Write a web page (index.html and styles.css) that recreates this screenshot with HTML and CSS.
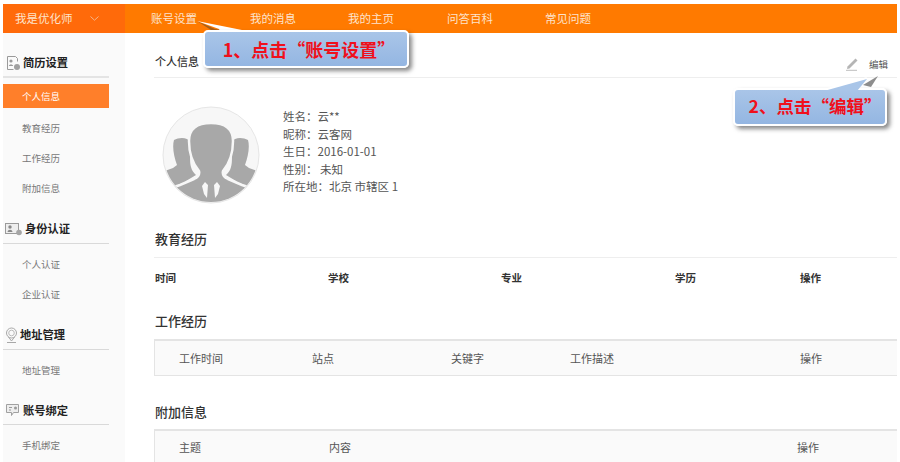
FILE: index.html
```html
<!DOCTYPE html>
<html lang="zh-CN">
<head>
<meta charset="utf-8">
<title>个人信息</title>
<link rel="stylesheet" href="styles.css">
</head>
<body>
<div class="page">
  <header class="topbar">
    <div class="brand"><span>我是优化师</span>
      <svg class="chev" width="9" height="5" viewBox="0 0 9 5"><path d="M.5.5 4.5 4.200 8.500.5" fill="none" stroke="#f5b58a"/></svg>
    </div>
    <nav class="nav">
      <a class="n1">账号设置</a><a class="n2">我的消息</a><a class="n3">我的主页</a><a class="n4">问答百科</a><a class="n5">常见问题</a>
    </nav>
  </header>
  <div class="body">
    <aside class="side">
      <section class="group first">
        <h3 class="ghead"><svg class="gi" width="16" height="16" viewBox="0 0 16 16"><path d="M2.500 1.500h8l2 2v3M2.500 1.500v13h6" fill="none" stroke="#9a9a9a"/><circle cx="6" cy="6" r="1.600" fill="#9a9a9a"/><path d="M3.800 11c.3-2 4-2 4.400 0z" fill="#9a9a9a"/><circle cx="12" cy="12" r="3" fill="#a0a0a0"/></svg>简历设置</h3>
        <a class="item active">个人信息</a><a class="item">教育经历</a><a class="item">工作经历</a><a class="item">附加信息</a>
      </section>
      <section class="group g2">
        <h3 class="ghead"><svg class="gi" width="18" height="14" viewBox="0 0 18 14"><rect x=".5" y="1.500" width="13" height="10" fill="#eee" stroke="#9a9a9a"/><circle cx="5" cy="5" r="1.700" fill="#888"/><path d="M2.500 10c.3-3 4.700-3 5 0z" fill="#888"/><circle cx="14" cy="10.500" r="2.800" fill="#a5a5a5"/></svg>身份认证</h3>
        <a class="item">个人认证</a><a class="item">企业认证</a>
      </section>
      <section class="group g3">
        <h3 class="ghead"><svg class="gi" width="13" height="17" viewBox="0 0 13 17"><circle cx="6.500" cy="6" r="5" fill="none" stroke="#a8a8a8"/><circle cx="6.500" cy="6" r="2.800" fill="none" stroke="#bbb"/><path d="M3.500 10 6.500 14 9.500 10M2 15.500h9" fill="none" stroke="#a8a8a8"/></svg>地址管理</h3>
        <a class="item">地址管理</a>
      </section>
      <section class="group g3 g4">
        <h3 class="ghead"><svg class="gi" width="16" height="15" viewBox="0 0 16 15"><path d="M1.500 1.500h12v8h-5l-2 3v-3h-5z" fill="#eee" stroke="#a0a0a0"/><path d="M4 4.500h3M4 7h2" stroke="#999"/><circle cx="10.500" cy="5" r="1.500" fill="#999"/></svg>账号绑定</h3>
        <a class="item">手机绑定</a>
      </section>
    </aside>
    <main class="main">
      <div class="head">
        <h2 class="title">个人信息</h2>
        <div class="edit">
          <svg width="13" height="14" viewBox="0 0 13 14"><path d="M1.500 9.500 9.500 1.500l2 2-8 8-2.500.5z" fill="#b5b5b5"/><path d="M0 13.300h11" stroke="#bdbdbd"/></svg>
          <span>编辑</span>
        </div>
      </div>
      <div class="profile">
        <svg class="avatar" width="98" height="98" viewBox="0 0 98 98">
          <circle cx="49" cy="49" r="48" fill="#f7f7f7" stroke="#e6e6e6"/>
          <clipPath id="c"><circle cx="49" cy="49" r="47"/></clipPath>
          <g clip-path="url(#c)" fill="#a8a8a8">
            <path d="M12 34c5-3 14-3 16 2 1 9-1 18 1 25 1 4 3 6 5 8l-10 6-5 6-22 0 0-14 14-5 4-3c-3-8-5-18-3-25z"/>
            <path d="M86 34c-5-3-14-3-16 2-1 9 1 18-1 25-1 4-3 6-5 8l10 6 5 6 22 0 0-14-14-5-4-3c3-8 5-18 3-25z"/>
            <path d="M49 17c15 0 22 6 22 18 0 13-4 23-10 30-1 4 1 6 5 8l14 6 12 4 0 18-86 0 0-18 12-4 14-6c4-2 6-4 5-8-6-7-10-17-10-30 0-12 7-18 22-18z" stroke="#f7f7f7" stroke-width="2.500"/>
            <path d="M43 76l3 3-1 13-3-4-2-8zM55 76l-3 3 1 13 3-4 2-8z" fill="#f7f7f7"/>
          </g>
        </svg>
        <ul class="info">
          <li>姓名：云**</li><li>昵称：云客网</li><li>生日：2016-01-01</li><li>性别： 未知</li><li>所在地：北京 市辖区 1</li>
        </ul>
      </div>
      <h2 class="sec sec-edu">教育经历</h2>
      <div class="edu-row">
        <span class="c-a">时间</span><span class="c-b">学校</span><span class="c-c">专业</span><span class="c-d">学历</span><span>操作</span>
      </div>
      <h2 class="sec sec-tb">工作经历</h2>
      <div class="tbl">
        <span class="w1">工作时间</span><span class="w2">站点</span><span class="w3">关键字</span><span class="w4">工作描述</span><span>操作</span>
      </div>
      <h2 class="sec sec-tb2">附加信息</h2>
      <div class="tbl tbl-last">
        <span class="a1">主题</span><span class="a2">内容</span><span>操作</span>
      </div>
    </main>
  </div>
  <svg class="tail tail-1" width="60" height="18" viewBox="0 0 60 18"><path d="M0 0 18 8 30 10 14 9z" fill="#a3601c"/><path d="M0 0 50 10 50 16 26 16 22 8z" fill="#fff"/><path d="M30 9 46 13 32 14z" fill="#b4cceb"/></svg>
  <div class="callout call-1">1、点击“账号设置”</div>
  <div class="callout call-2">2、点击“编辑”</div>
  <svg class="tail tail-2" width="64" height="20" viewBox="0 0 64 20"><path d="M43 11 58 2 51 13z" fill="#8d8d8d"/><path d="M0 16 47 3 38 16z" fill="#fff"/><path d="M4 17 47 5 37 17z" fill="#a9c5e8"/></svg>
</div>
</body>
</html>
```

FILE: styles.css
```css
* { box-sizing: border-box; }
html, body { margin: 0; padding: 0; background: #fff; }
body { font-family: "Noto Sans CJK SC", "Noto Sans", sans-serif; color: #333; overflow: hidden; }
.page { position: relative; width: 894px; height: 458px; margin: 4px 0 0 3px; overflow: hidden; }

.topbar { display: flex; height: 29px; background: #ff7a00; color: #fde3cc; font-size: 11.500px; line-height: 29px; }
.brand { display: flex; align-items: center; width: 122px; padding-left: 12px; background: #ff6a0a; }
.chev { margin-left: 17px; }
.nav { display: flex; padding-left: 26px; }
.n1 { width: 99px; } .n2 { width: 98px; } .n3 { width: 99px; } .n4 { width: 98px; }

.body { display: flex; height: 429px; }
.side { width: 122px; flex: none; background: #fafafa; padding-right: 16px; }
.group { display: flex; flex-direction: column; }
.first { padding-top: 21px; }
.g2 { padding-top: 16.500px; }
.g3 { padding-top: 17px; }
.g4 { padding-top: 16.500px; }
.ghead { display: flex; align-items: center; height: 24px; margin: 0 0 5px; padding: 0 0 4px 2px; border-bottom: 1px solid #d9d9d9; font-size: 11.250px; font-weight: 700; color: #222; line-height: 1; }
.first .ghead { margin-bottom: 6px; border-bottom-width: 2px; border-bottom-color: #e4e4e4; }
.gi { margin-right: 2px; flex: none; }
.item { display: block; height: 30px; line-height: 30px; padding-left: 19px; font-size: 9.500px; color: #777; }
.item.active { height: 24px; line-height: 24px; margin-bottom: 5px; background: #ff7f2a; color: #fff; }

.main { flex: 1; padding: 0 0 0 29px; min-width: 0; }
.head { display: flex; justify-content: space-between; align-items: center; height: 45px; padding: 17px 9px 0 1px; border-bottom: 1px solid #eee; }
.title { margin: 0; font-size: 11px; font-weight: 500; color: #333; line-height: 1; padding-bottom: 4px; }
.edit { display: flex; align-items: center; gap: 10px; font-size: 9.500px; color: #555; }
.profile { display: flex; align-items: center; padding: 28px 0 0 8px; }
.avatar { flex: none; margin-right: 23px; }
.info { list-style: none; margin: 0 0 6px; padding: 0; font-size: 11.500px; line-height: 17.500px; color: #555; }
.sec { margin: 0; padding-left: 1px; font-size: 13px; font-weight: 500; color: #333; line-height: 18px; }
.sec-edu { padding-top: 26px; padding-bottom: 9px; border-bottom: 1px solid #eee; }
.edu-row { display: flex; margin-top: 12px; padding-left: 1px; font-size: 10.500px; font-weight: 700; color: #333; line-height: 16px; }
.c-a { width: 173px; } .c-b { width: 173px; } .c-c { width: 174px; } .c-d { width: 125px; }
.sec-tb { padding-top: 26px; }
.sec-tb2 { padding-top: 27px; }
.tbl { display: flex; align-items: center; height: 37px; margin-top: 9px; padding-left: 24px; background: #fafafa; border: 1px solid #e4e4e4; border-top-width: 2px; border-right: 0; font-size: 11px; color: #555; }
.tbl-last { height: 34px; margin-top: 8px; border-bottom: 0; }
.w1 { width: 133px; } .w2 { width: 139px; } .w3 { width: 119px; } .w4 { width: 230px; }
.a1 { width: 150px; } .a2 { width: 468px; }

.callout { position: absolute; display: flex; align-items: center; justify-content: center; background: linear-gradient(#a9c5e8, #94b6e2); border: 2.500px solid #fff; border-radius: 5px; box-shadow: 3px 3px 4px rgba(60,60,60,.6); color: #f0101c; font-weight: 700; font-size: 18px; line-height: 1; white-space: nowrap; }
.call-1 { left: 200px; top: 26px; width: 206px; height: 38px; padding-left: 6px; }
.call-2 { left: 730px; top: 84px; width: 154px; height: 38px; padding: 0 0 3px 10px; font-size: 17.500px; }
.tail { position: absolute; }
.tail-1 { left: 194px; top: 17px; }
.tail-2 { left: 817px; top: 70px; }
```
